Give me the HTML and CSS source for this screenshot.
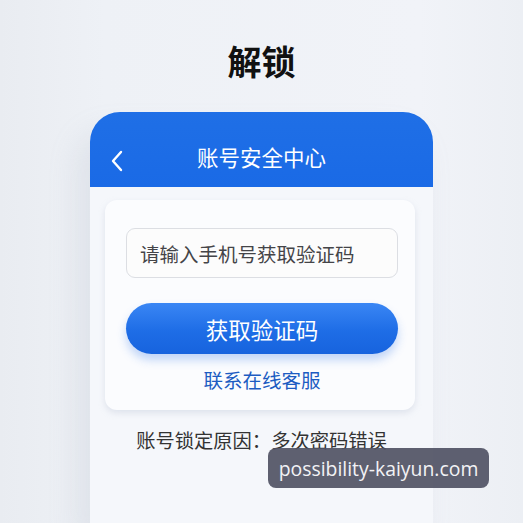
FILE: index.html
```html
<!DOCTYPE html>
<html lang="zh-CN">
<head>
<meta charset="utf-8">
<link rel="stylesheet" href="styles.css">
</head>
<body>
<div class="page">
  <h1 class="title">解锁</h1>
  <div class="phone">
    <div class="phone-header">
      <svg class="back" width="14" height="22" viewBox="0 0 14 22"><path d="M11 2 L3 11 L11 20" fill="none" stroke="#fff" stroke-width="2.4" stroke-linecap="round" stroke-linejoin="round"/></svg>
      <span class="header-title">账号安全中心</span>
    </div>
    <div class="phone-body">
      <div class="panel">
        <div class="input">请输入手机号获取验证码</div>
        <div class="btn">获取验证码</div>
        <div class="link">联系在线客服</div>
      </div>
      <div class="reason">账号锁定原因：多次密码错误</div>
    </div>
  </div>
</div>
<div class="watermark">possibility-kaiyun.com</div>
</body>
</html>
```
FILE: styles.css
```css
html, body {
  margin: 0;
  height: 100%;
}
body {
  background: linear-gradient(90deg, #e9ecf1 0%, #eef1f6 20%, #f1f3f8 80%, #eceff4 100%);
  font-family: "Noto Sans CJK SC", "Noto Sans", sans-serif;
  overflow: hidden;
  position: relative;
}
.page {
  height: 523px;
  display: flex;
  flex-direction: column;
  align-items: center;
}
.title {
  margin: 38px 0 0;
  font-size: 34px;
  line-height: 46px;
  font-weight: 700;
  color: #111;
}
.phone {
  margin-top: 28px;
  width: 343px;
  flex: 1;
  display: flex;
  flex-direction: column;
  border-radius: 30px 30px 0 0;
  overflow: hidden;
  background: #f4f6fa;
  box-shadow: -12px 20px 30px rgba(150, 160, 180, 0.18);
}
.phone-header {
  height: 75px;
  background: linear-gradient(180deg, #1f6fe6 0%, #1a6ae6 100%);
  display: flex;
  align-items: center;
  padding: 22px 20px 0;
  box-sizing: border-box;
  position: relative;
}
.back {
  flex: none;
}
.header-title {
  position: absolute;
  left: 0;
  right: 0;
  text-align: center;
  top: 30px;
  color: #fff;
  font-size: 21.5px;
  line-height: 30px;
}
.phone-body {
  flex: 1;
  display: flex;
  flex-direction: column;
  background: #f5f7fb;
}
.panel {
  margin: 13px 18px 0 15px;
  background: #fbfcfe;
  border-radius: 12px;
  padding: 28px 17px 16px 21px;
  box-shadow: 0 3px 6px rgba(180, 190, 210, 0.35);
}
.input {
  height: 50px;
  box-sizing: border-box;
  border: 1.5px solid #dcdee3;
  border-radius: 9px;
  background: #fcfcfc;
  padding-left: 13px;
  display: flex;
  align-items: center;
  font-size: 19.5px;
  color: #444448;
}
.btn {
  margin-top: 25px;
  height: 51px;
  border-radius: 26px;
  background: linear-gradient(180deg, #3a86f4 0%, #1e6de6 55%, #1763de 100%);
  box-shadow: 0 6px 10px rgba(40, 110, 230, 0.28);
  color: #fff;
  font-size: 22.5px;
  display: flex;
  align-items: center;
  justify-content: center;
}
.link {
  margin-top: 12px;
  text-align: center;
  font-size: 19.5px;
  line-height: 28px;
  color: #1d5cc2;
}
.reason {
  margin-top: 16px;
  text-align: center;
  font-size: 19.3px;
  line-height: 28px;
  color: #333;
}
.watermark {
  position: absolute;
  left: 268px;
  top: 448px;
  width: 221px;
  height: 40px;
  box-sizing: border-box;
  border-radius: 8px;
  background: rgba(80, 82, 100, 0.92);
  color: #f2f2f5;
  font-family: "Open Sans", "Noto Sans", sans-serif;
  font-size: 19.4px;
  display: flex;
  align-items: center;
  justify-content: center;
}
```
